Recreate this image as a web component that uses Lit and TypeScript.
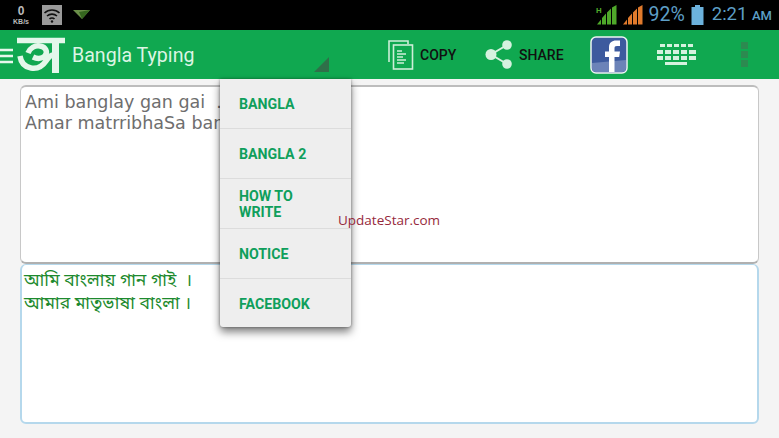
import { LitElement, html, css } from "lit";
import { customElement } from "lit/decorators.js";

const menu = ["BANGLA", "BANGLA 2", "HOW TO WRITE", "NOTICE", "FACEBOOK"];

@customElement("app-root")
export class AppRoot extends LitElement {
  static styles = css`
    :host { display: block; position: relative; width: 779px; height: 438px; overflow: hidden; background: #f4f4f4; font-family: Roboto, sans-serif; }
    .status { height: 30px; background: #000; display: flex; align-items: center; }
    .kb { width: 18px; margin-left: 12px; color: #bbb; font: bold 7px/7px "Liberation Sans", sans-serif; text-align: center; }
    .kb b { display: block; font-size: 12px; line-height: 13px; }
    .wifi { margin-left: 12px; display: block; }
    .tri { margin-left: 11px; display: block; }
    .spacer { flex: 1; }
    .sig1 { display: block; margin-right: 6px; }
    .sig2 { display: block; margin-right: 6px; }
    .pct { color: #5d9fc6; font-size: 19.5px; line-height: 30px; }
    .batt { display: block; margin: 0 8px 0 6px; }
    .time { color: #5d9fc6; font-size: 18.5px; line-height: 30px; margin-right: 7px; }
    .time small { font-size: 13px; font-weight: 500; }
    .bar { height: 49px; background: #10a850; display: flex; align-items: center; }
    .ham { display: block; width: 13px; height: 18px; margin-top: 2px; }
    .logo { display: block; margin-left: 4px; margin-top: -1px; }
    .title { color: #dcf5e4; font-size: 19.6px; line-height: 24px; padding-top: 2px; margin-left: 6px; width: 242px; }
    .corner { display: block; margin-top: 27px; align-self: flex-start; }
    .act { display: flex; align-items: center; color: #111; font-size: 14px; font-weight: 500; }
    .copy { margin-left: 59px; gap: 6px; width: 97px; }
    .share { gap: 6px; width: 105px; }
    .fb { display: block; width: 38px; height: 38px; }
    .kbd { display: block; margin-left: 29px; }
    .dots { display: block; margin-left: 45px; }
    .main { padding: 6px 20px 0; display: flex; flex-direction: column; }
    .box { box-sizing: border-box; background: #fff; border-radius: 6px; }
    .in { height: 179px; border: 1px solid #c8c8c8; border-top: 2px solid #bdbdbd; border-bottom: 2px solid #b0b0b0; color: #6e6e6e; font: 17.5px/21px "DejaVu Sans", sans-serif; white-space: pre; overflow: hidden; padding: 5px 4px; }
    .out { height: 160px; border: 2px solid #b5d8ec; border-width: 1px 2px 2px 2px; color: #1d8a2e; font: 17.5px/23px "Noto Sans Bengali", "Lohit Bengali", "Noto Serif Bengali", "Noto Sans", sans-serif; white-space: pre; padding: 5px 2px; }
    .menu { position: absolute; left: 220px; top: 79px; width: 131px; height: 248px; background: #eeeeee; border-radius: 0 0 3px 3px; box-shadow: 0 5px 9px rgba(0,0,0,.5), 0 0 3px rgba(0,0,0,.4); display: flex; flex-direction: column; }
    .item { box-sizing: border-box; flex: 0 0 50px; display: flex; align-items: center; padding: 0 20px 0 19px; color: #0f9f5c; font-size: 14.2px; font-weight: 700; line-height: 16px; border-bottom: 1px solid #dcdcdc; }
    .item:last-child { border-bottom: 0; flex: 0 0 48px; padding-top: 2px; }
    .mark { position: absolute; left: 338px; top: 212px; color: #96293b; font: 13.5px/17px "Open Sans", sans-serif; }
  `;

  render() {
    return html`
      <div class="status">
        <div class="kb"><b>0</b>KB/s</div>
        <svg class="wifi" width="20" height="20" viewBox="0 0 20 20">
          <rect width="20" height="20" fill="#9a9a9a"/>
          <path d="M2.500 8a11 11 0 0 1 15 0M5 11a7.500 7.500 0 0 1 10 0M7.500 14a3.500 3.500 0 0 1 5 0" fill="none" stroke="#111" stroke-width="1.600"/>
          <circle cx="10" cy="16.500" r="1.200" fill="#111"/>
        </svg>
        <svg class="tri" width="18" height="12" viewBox="0 0 18 12">
          <path d="M0 1L17 1 9 10z" fill="#6b8f4a"/><path d="M6 3L17 1 9 10z" fill="#35661f"/>
        </svg>
        <div class="spacer"></div>
        <svg class="sig1" width="21" height="20" viewBox="0 0 21 20">
          <path d="M1 19.500l4-5v5zM6 19.500V13l4-4.500v11zM11 19.500V7.500l4-4v16zM16 19.500V2.500l4.500-2.500v19.500z" fill="#4fa82a"/>
          <text x="0" y="8" font-size="8" font-weight="700" fill="#4fa82a" font-family="Roboto">H</text>
        </svg>
        <svg class="sig2" width="20" height="20" viewBox="0 0 20 20">
          <path d="M0 19.500l4-5v5zM5 19.500V13l4-4.500v11zM10 19.500V7.500l4-4v16zM15 19.500V2.500L19.500 0v19.500z" fill="#e07a2c"/>
        </svg>
        <span class="pct">92%</span>
        <svg class="batt" width="13" height="20" viewBox="0 0 13 20"><path d="M4 0h5v2h3.500v18H0.500V2H4z" fill="#6cb2dc"/></svg>
        <span class="time">2:21 <small>AM</small></span>
      </div>
      <div class="bar">
        <svg class="ham" viewBox="0 0 13 18"><path d="M0 3h13M0 9h13M0 15h13" stroke="#e6f7ec" stroke-width="2.600"/></svg>
        <svg class="logo" width="49" height="37" viewBox="0 0 49 37" fill="none" stroke="#e4f7ea">
          <path d="M0 4.500h48" stroke-width="5.500"/>
          <path d="M38.500 4v33" stroke-width="7"/>
          <path d="M11 17c2-5 7-8 12-7 6 1 8 6 5 10-3 3-8 3-12 1" stroke-width="5.500"/>
          <path d="M3 20c1 7 5 11 11 12 6 1 11-1 15-7 2-3 4-6 7-6" stroke-width="5.500"/>
        </svg>
        <span class="title">Bangla Typing</span>
        <svg class="corner" width="15" height="15" viewBox="0 0 15 15"><path d="M15 0v15H0z" fill="#2f7049"/></svg>
        <div class="act copy">
          <svg width="26" height="30" viewBox="0 0 26 30" fill="none" stroke="#cdeed8" stroke-width="1.600">
            <path d="M1 22V1h19v3"/><rect x="5.500" y="5" width="19" height="24" fill="#10a850"/>
            <path d="M9 11h5M9 14h9M9 17h6M9 20h9M9 23h7" stroke-width="1.300"/>
          </svg>
          <span>COPY</span>
        </div>
        <div class="act share">
          <svg width="28" height="29" viewBox="0 0 28 29" fill="#d5f2df">
            <path d="M22 5L6 14.500 22 24" fill="none" stroke="#d5f2df" stroke-width="2"/>
            <circle cx="6" cy="14.500" r="5.500"/><circle cx="22" cy="5" r="4.800"/><circle cx="22" cy="24" r="4.800"/>
          </svg>
          <span>SHARE</span>
        </div>
        <svg class="fb" viewBox="0 0 38 38">
          <rect x="1" y="1" width="36" height="36" rx="5" fill="#3d5a9e" stroke="#eef4f4" stroke-width="1.500"/>
          <path d="M2 27L36 24v8a4 4 0 0 1-4 4H6a4 4 0 0 1-4-4z" fill="#6c83b8"/>
          <path d="M19 36V21h-4v-5.500h4v-4c0-5 3-7 7-7h4v5.500h-3c-2 0-2.500.7-2.500 2.500v3h5.500l-.8 5.500h-4.700v15z" fill="#fff"/>
        </svg>
        <svg class="kbd" width="39" height="22" viewBox="0 0 39 22" fill="#d5f2df">
          <rect x="3" y="0" width="5" height="3"/><rect x="10" y="0" width="5" height="3"/><rect x="17" y="0" width="5" height="3"/><rect x="24" y="0" width="5" height="3"/><rect x="31" y="0" width="5" height="3"/>
          <rect x="0" y="6" width="6" height="4"/><rect x="8" y="6" width="6" height="4"/><rect x="16" y="6" width="6" height="4"/><rect x="24" y="6" width="6" height="4"/><rect x="32" y="6" width="7" height="4"/>
          <rect x="0" y="12" width="6" height="4"/><rect x="8" y="12" width="6" height="4"/><rect x="16" y="12" width="6" height="4"/><rect x="24" y="12" width="6" height="4"/><rect x="32" y="12" width="7" height="4"/>
          <rect x="8" y="18" width="22" height="3"/>
        </svg>
        <svg class="dots" width="7" height="25" viewBox="0 0 7 25" fill="#2c8a50">
          <rect width="7" height="7"/><rect y="9" width="7" height="7"/><rect y="18" width="7" height="7"/>
        </svg>
      </div>
      <div class="main">
        <div class="box in">Ami banglay gan gai  .
Amar matrribhaSa bangla .</div>
        <div class="box out">আমি বাংলায় গান গাই  ।
আমার মাতৃভাষা বাংলা ।</div>
      </div>
      <div class="menu">
        ${menu.map((m) => html`<div class="item">${m}</div>`)}
      </div>
      <div class="mark">UpdateStar.com</div>
    `;
  }
}
